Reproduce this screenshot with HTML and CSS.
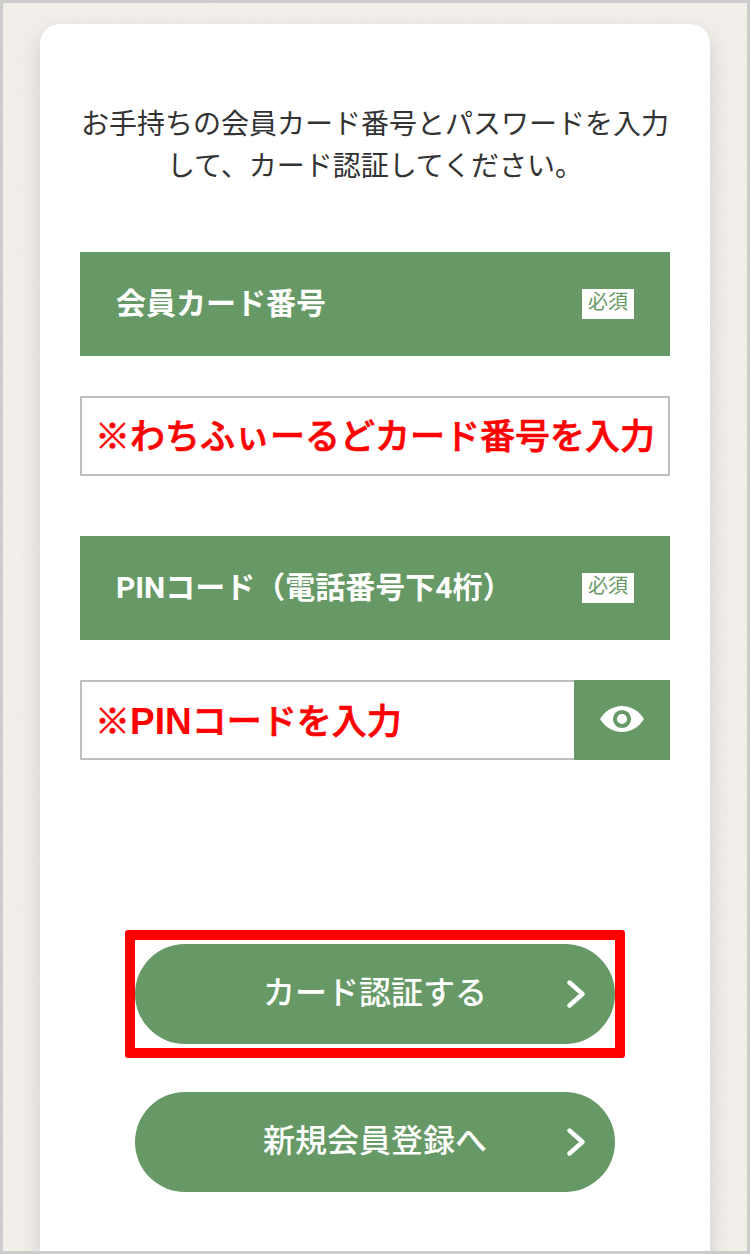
FILE: index.html
```html
<!DOCTYPE html>
<html lang="ja">
<head>
  <meta charset="UTF-8">
  <title>カード認証</title>
  <link rel="stylesheet" href="styles.css">
</head>
<body>

  <!-- paper texture -->
  <svg class="paper" width="750" height="1254" aria-hidden="true">
    <filter id="grain">
      <feTurbulence type="fractalNoise" baseFrequency="0.35" numOctaves="3" seed="4"/>
      <feColorMatrix values="0 0 0 0 0.5  0 0 0 0 0.45  0 0 0 0 0.4  0.14 0 0 0 -0.05"/>
    </filter>
    <rect width="750" height="1254" filter="url(#grain)"/>
  </svg>

  <main class="card">
    <p class="lead">お手持ちの会員カード番号とパスワードを入力して、カード認証してください。</p>

    <form class="auth-form">
      <div class="field">
        <div class="field-label">
          <label>会員カード番号</label>
          <span class="required">必須</span>
        </div>
        <div class="field-input">
          <span class="note">※わちふぃーるどカード番号を入力</span>
        </div>
      </div>

      <div class="field">
        <div class="field-label">
          <label>PINコード（電話番号下4桁）</label>
          <span class="required">必須</span>
        </div>
        <div class="field-input has-toggle">
          <span class="note">※<b class="latin">PIN</b>コードを入力</span>
          <button type="button" class="toggle" aria-label="表示">
            <svg width="44" height="26" viewBox="0 0 44 26">
              <path fill="#fff" d="M0 13C5 5 13 0 22 0s17 5 22 13c-5 8-13 13-22 13S5 21 0 13z"/>
              <circle cx="22" cy="13" r="7.1" fill="#fff" stroke="#669966" stroke-width="4"/>
            </svg>
          </button>
        </div>
      </div>

      <div class="actions">
        <div class="highlight">
          <button type="button" class="btn">
            カード認証する
            <svg class="arrow" width="18" height="28" viewBox="0 0 18 28">
              <path d="M2.5 2.5l13 11.5-13 11.5"/>
            </svg>
          </button>
        </div>
        <button type="button" class="btn">
          新規会員登録へ
          <svg class="arrow" width="18" height="28" viewBox="0 0 18 28">
            <path d="M2.5 2.5l13 11.5-13 11.5"/>
          </svg>
        </button>
      </div>
    </form>
  </main>

</body>
</html>
```
FILE: styles.css
```css
* {
  box-sizing: border-box;
}

body {
  margin: 0;
  height: 1254px;
  padding: 21px 37px 0;
  border: 3px solid #ccc;
  background: #f2efeb;
  color: #333;
  font-family: Roboto, "Noto Sans CJK JP", sans-serif;
  overflow: hidden;
}

.paper {
  position: absolute;
  top: 0;
  left: 0;
  z-index: -1;
}

.card {
  height: 1227px;
  padding: 80px 40px 0;
  background: #fff;
  border-radius: 20px 20px 0 0;
  box-shadow: 0 10px 20px rgba(0, 0, 0, 0.14);
}

.lead {
  margin: 0 0 64px;
  font-size: 28px;
  line-height: 42px;
  text-align: center;
}

.field {
  margin-bottom: 60px;
}

.field-label {
  display: flex;
  align-items: center;
  justify-content: space-between;
  height: 104px;
  margin-bottom: 40px;
  padding: 0 36px;
  background: #669966;
  color: #fff;
}

.field-label label {
  font-size: 30px;
  font-weight: bold;
  line-height: 44px;
}

.required {
  width: 52px;
  height: 30px;
  background: #fff;
  color: #669966;
  font-size: 20px;
  line-height: 26px;
  text-align: center;
}

.field-input {
  display: flex;
  align-items: center;
  height: 80px;
  padding-left: 13px;
  border: 2px solid #bfbfbf;
  background: #fff;
}

.has-toggle {
  justify-content: space-between;
  border-right: none;
}

.note {
  padding-bottom: 5px;
  color: #f00;
  font-family: "Noto Sans CJK JP", sans-serif;
  font-size: 35px;
  font-weight: 500;
  line-height: 50px;
  white-space: nowrap;
  -webkit-text-stroke: 0.7px #f00;
}

.has-toggle .note {
  padding-bottom: 3px;
}

.latin {
  font-family: "Liberation Sans", sans-serif;
  font-size: 37px;
  line-height: 1;
  -webkit-text-stroke: 0;
}

.toggle {
  display: flex;
  align-items: center;
  justify-content: center;
  width: 96px;
  height: 80px;
  padding: 0 0 2px;
  border: none;
  background: #669966;
}

.actions {
  display: flex;
  flex-direction: column;
  align-items: center;
  gap: 34px;
  padding-top: 110px;
}

.highlight {
  padding: 4px 0;
  border: 10px solid #f00;
  border-radius: 3px;
}

.btn {
  display: flex;
  align-items: center;
  justify-content: center;
  position: relative;
  width: 480px;
  height: 100px;
  padding: 0 0 8px;
  border: none;
  border-radius: 50px;
  background: #669966;
  color: #fff;
  font-family: inherit;
  font-size: 32px;
  font-weight: 500;
}

.arrow {
  position: absolute;
  top: 36px;
  right: 30px;
  fill: none;
  stroke: #fff;
  stroke-width: 4.4;
  stroke-linecap: round;
  stroke-linejoin: round;
}
```
